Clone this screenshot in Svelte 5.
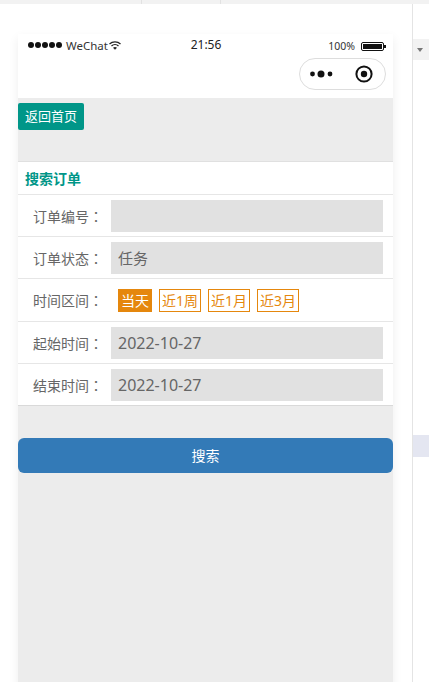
<script>
  const rows = [
    { label: '订单编号', value: '' },
    { label: '订单状态', value: '任务' },
    { label: '时间区间', chips: ['当天', '近1周', '近1月', '近3月'] },
    { label: '起始时间', value: '2022-10-27', date: true },
    { label: '结束时间', value: '2022-10-27', date: true }
  ];
</script>

<div class="tabs">
  <div class="tab first"></div>
  <div class="tab second"></div>
</div>

<div class="page">
  <div class="stage">
    <div class="phone">
      <div class="status">
        <div class="carrier">
          <span class="signal">
            {#each [0, 1, 2, 3, 4] as dot (dot)}<i></i>{/each}
          </span>
          <span class="name">WeChat</span>
          <svg class="wifi" width="12" height="9" viewBox="0 0 12 9">
            <path d="M0.5 3 A8 8 0 0 1 11.5 3" fill="none" stroke="#222" stroke-width="1.3" />
            <path d="M2.5 5 A5 5 0 0 1 9.5 5" fill="none" stroke="#222" stroke-width="1.3" />
            <path d="M4 6.8 A3 3 0 0 1 8 6.8 L6 8.8 Z" fill="#222" />
          </svg>
        </div>
        <div class="time">21:56</div>
        <div class="power">
          <span>100%</span>
          <span class="battery"><b></b></span>
          <span class="nub"></span>
        </div>
      </div>
      <div class="nav">
        <div class="capsule">
          <svg width="26" height="10" viewBox="0 0 26 10">
            <circle cx="2.5" cy="5" r="2.4" fill="#111" />
            <circle cx="11" cy="5" r="3.5" fill="#111" />
            <circle cx="20" cy="5" r="2.4" fill="#111" />
          </svg>
          <svg width="18" height="18" viewBox="0 0 18 18">
            <circle cx="9" cy="9" r="7.6" fill="none" stroke="#111" stroke-width="2" />
            <circle cx="9" cy="9" r="3.2" fill="#111" />
          </svg>
        </div>
      </div>

      <div class="content">
        <button class="back">返回首页</button>

        <div class="panel">
          <div class="title">搜索订单</div>
          {#each rows as row (row.label)}
            <div class="row" class:chips-row={row.chips}>
              <div class="label">{row.label}<span class="colon">：</span></div>
              {#if row.chips}
                <div class="chips">
                  {#each row.chips as chip, i (chip)}
                    <span class="chip" class:active={i === 0}>{chip}</span>
                  {/each}
                </div>
              {:else}
                <div class="field" class:date={row.date}>{row.value}</div>
              {/if}
            </div>
          {/each}
        </div>

        <button class="search">搜索</button>
      </div>
    </div>
  </div>

  <div class="side">
    <div class="side-head"><span class="arrow"></span></div>
    <div class="side-mark"></div>
  </div>
</div>

<style>
  :global(body) {
    margin: 0;
    background: #fff;
    overflow: hidden;
  }

  .tabs {
    display: flex;
    height: 4px;
    background: #f2f2f2;
  }

  .tab {
    border-right: 1px solid #e2e2e2;
  }

  .tab.first {
    width: 141px;
  }

  .tab.second {
    width: 78px;
  }

  .page {
    display: flex;
    height: 678px;
    overflow: hidden;
    font-family: "Noto Sans", "Noto Sans CJK SC", sans-serif;
  }

  .stage {
    width: 413px;
    box-sizing: border-box;
    border-right: 1px solid #e4e4e4;
    padding: 30px 0 0 18px;
    overflow: hidden;
  }

  .phone {
    width: 375px;
    min-height: 700px;
    background: #ececec;
    box-shadow: 0 4px 10px rgba(0, 0, 0, 0.07);
  }

  .status {
    height: 22px;
    padding: 0 7px 0 10px;
    background: #fff;
    display: grid;
    grid-template-columns: 1fr auto 1fr;
    align-items: center;
    color: #333;
    font-size: 12px;
  }

  .carrier {
    display: flex;
    align-items: center;
    gap: 4px;
  }

  .name {
    font-size: 11.5px;
  }

  .signal {
    display: flex;
    gap: 1px;
  }

  .signal i {
    width: 6px;
    height: 6px;
    border-radius: 50%;
    background: #111;
  }

  .wifi {
    margin-left: -3px;
  }

  .time {
    color: #222;
    padding: 0 2px 2px 0;
  }

  .power {
    display: flex;
    align-items: center;
    justify-content: flex-end;
    font-size: 10.5px;
    padding-top: 2px;
  }

  .battery {
    box-sizing: border-box;
    width: 23px;
    height: 9px;
    margin-left: 6px;
    border: 1px solid #111;
    border-radius: 2px;
    padding: 1px;
  }

  .battery b {
    display: block;
    height: 100%;
    background: #111;
  }

  .nub {
    width: 2px;
    height: 3px;
    background: #111;
  }

  .nav {
    height: 42px;
    padding: 2px 7px 0 0;
    background: #fff;
    display: flex;
    justify-content: flex-end;
    box-sizing: border-box;
  }

  .capsule {
    box-sizing: border-box;
    width: 87px;
    height: 32px;
    border: 1px solid #ddd;
    border-radius: 16px;
    display: flex;
    align-items: center;
    justify-content: space-between;
    padding: 0 12px 0 10px;
  }

  .content {
    padding-top: 5px;
  }

  .back {
    display: block;
    width: 66px;
    height: 27px;
    padding: 0 0 2px;
    border: 0;
    border-radius: 2px;
    background: #009688;
    color: #fff;
    font: inherit;
    font-size: 13px;
  }

  .panel {
    margin-top: 31px;
    background: #fff;
    border-top: 1px solid #e0e0e0;
    border-bottom: 1px solid #d9d9d9;
  }

  .title {
    height: 32px;
    line-height: 33px;
    padding-left: 7px;
    color: #009688;
    font-size: 14px;
    font-weight: 700;
  }

  .row {
    box-sizing: border-box;
    height: 42px;
    display: flex;
    align-items: center;
    border-top: 1px solid #e6e6e6;
  }

  .row.chips-row {
    height: 43px;
  }

  .label {
    width: 78px;
    margin-left: 15px;
    color: #666;
    font-size: 14px;
    white-space: nowrap;
  }

  .colon {
    font-family: "Noto Sans CJK TC", sans-serif;
  }

  .field {
    box-sizing: border-box;
    width: 272px;
    height: 32px;
    line-height: 32px;
    padding-left: 7px;
    background: #e1e1e1;
    color: #666;
    font-size: 15px;
  }

  .field.date {
    font-size: 16px;
  }

  .chips {
    display: flex;
    gap: 7px;
    padding-left: 7px;
  }

  .chip {
    box-sizing: border-box;
    height: 23px;
    line-height: 21px;
    padding: 0 2px;
    border: 1px solid #e5870d;
    color: #e5870d;
    font-size: 14px;
    white-space: nowrap;
  }

  .chip.active {
    background: #e5870d;
    color: #fff;
  }

  .search {
    display: block;
    width: 100%;
    height: 35px;
    padding: 0 0 2px;
    margin-top: 32px;
    border: 0;
    border-radius: 6px;
    background: #337ab7;
    color: #fff;
    font: inherit;
    font-size: 14px;
  }

  .side {
    flex: 1;
    padding-top: 35px;
  }

  .side-head {
    height: 21px;
    background: #f2f2f2;
    display: flex;
    align-items: center;
    justify-content: center;
  }

  .arrow {
    width: 0;
    height: 0;
    border-left: 3px solid transparent;
    border-right: 3px solid transparent;
    border-top: 4px solid #777;
    margin-left: -2px;
  }

  .side-mark {
    height: 22px;
    margin-top: 375px;
    background: #e4e6f1;
  }
</style>
